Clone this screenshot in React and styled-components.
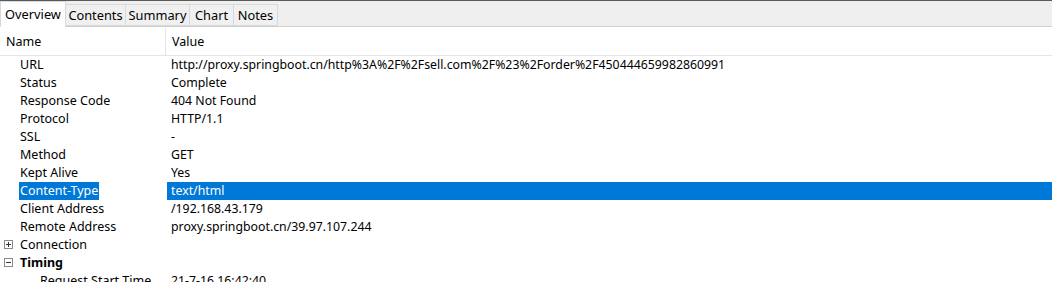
import React from "react";
import styled, { createGlobalStyle } from "styled-components";

const Global = createGlobalStyle`
  html, body { margin: 0; padding: 0; background: #fff; }
  body { font-family: "Noto Sans", "Noto Sans CJK SC", sans-serif; font-size: 12px; color: #000; overflow: hidden; }
`;

const Page = styled.div`
  width: 1052px;
  height: 282px;
  overflow: hidden;
  border-top: 1px solid #5a5a5a;
  box-sizing: border-box;
`;

const TabBar = styled.div`
  display: flex;
  align-items: flex-end;
  height: 25px;
  background: #efefef;
  border-bottom: 1px solid #d0d0d0;
  padding-left: 1px;
`;

const Tab = styled.div`
  box-sizing: border-box;
  width: ${(p) => p.$w}px;
  height: ${(p) => (p.$active ? "26px" : "22px")};
  margin-bottom: ${(p) => (p.$active ? "-1px" : "0")};
  display: flex;
  align-items: center;
  justify-content: center;
  background: ${(p) => (p.$active ? "#fff" : "#f0f0f0")};
  border: 1px solid #d9d9d9;
  border-bottom: ${(p) => (p.$active ? "none" : "1px solid #d9d9d9")};
  margin-left: -1px;
  font-size: 12.8px;
  line-height: 1;
  padding-top: ${(p) => (p.$active ? "0" : "1px")};
`;

const Header = styled.div`
  display: grid;
  grid-template-columns: 166px 1fr;
  height: 27px;
  border-bottom: 1px solid #e5e5e5;
  margin-top: 1px;
`;

const HeadCell = styled.div`
  display: flex;
  align-items: center;
  padding-left: ${(p) => p.$pad}px;
  font-size: 12.5px;
  border-right: ${(p) => (p.$divider ? "1px solid #e5e5e5" : "none")};
`;

const Row = styled.div`
  display: grid;
  grid-template-columns: 167px 1fr;
  height: 18px;
  font-size: 12.5px;
  line-height: 18px;
  white-space: nowrap;
`;

const NameCell = styled.div`
  display: flex;
  align-items: center;
  padding-left: ${(p) => p.$indent}px;
  font-weight: ${(p) => (p.$bold ? 700 : 400)};
  position: relative;
`;

const NameText = styled.span`
  padding: 0 1px;
  margin-left: -1px;
  background: ${(p) => (p.$sel ? "#0078d7" : "transparent")};
  color: ${(p) => (p.$sel ? "#fff" : "#000")};
`;

const ValueCell = styled.div`
  padding-left: 4px;
  font-size: 12.3px;
  background: ${(p) => (p.$sel ? "#0078d7" : "transparent")};
  color: ${(p) => (p.$sel ? "#fff" : "#000")};
`;

const Toggle = styled.span`
  position: absolute;
  left: 4px;
  top: 4px;
  width: 9px;
  height: 9px;
  box-sizing: border-box;
  border: 1px solid #8a8a8a;
  background: #fff;
  &::before {
    content: "";
    position: absolute;
    left: 1px;
    top: 3px;
    width: 5px;
    height: 1px;
    background: #333;
  }
  &::after {
    content: "";
    display: ${(p) => (p.$open ? "none" : "block")};
    position: absolute;
    left: 3px;
    top: 1px;
    width: 1px;
    height: 5px;
    background: #333;
  }
`;

const tabs = [
  { label: "Overview", w: 66 },
  { label: "Contents", w: 61 },
  { label: "Summary", w: 65 },
  { label: "Chart", w: 45 },
  { label: "Notes", w: 45 },
];

const rows = [
  { name: "URL", value: "http://proxy.springboot.cn/http%3A%2F%2Fsell.com%2F%23%2Forder%2F450444659982860991", indent: 20 },
  { name: "Status", value: "Complete", indent: 20 },
  { name: "Response Code", value: "404 Not Found", indent: 20 },
  { name: "Protocol", value: "HTTP/1.1", indent: 20 },
  { name: "SSL", value: "-", indent: 20 },
  { name: "Method", value: "GET", indent: 20 },
  { name: "Kept Alive", value: "Yes", indent: 20 },
  { name: "Content-Type", value: "text/html", indent: 20, sel: true },
  { name: "Client Address", value: "/192.168.43.179", indent: 20 },
  { name: "Remote Address", value: "proxy.springboot.cn/39.97.107.244", indent: 20 },
  { name: "Connection", value: "", indent: 20, toggle: "closed" },
  { name: "Timing", value: "", indent: 20, toggle: "open", bold: true },
  { name: "Request Start Time", value: "21-7-16 16:42:40", indent: 40 },
];

export default function App() {
  return (
    <Page>
      <Global />
      <TabBar>
        {tabs.map((t, i) => (
          <Tab key={t.label} $w={t.w} $active={i === 0}>{t.label}</Tab>
        ))}
      </TabBar>
      <Header>
        <HeadCell $pad={6} $divider>Name</HeadCell>
        <HeadCell $pad={6}>Value</HeadCell>
      </Header>
      {rows.map((r) => (
        <Row key={r.name}>
          <NameCell $indent={r.indent} $bold={r.bold}>
            {r.toggle && <Toggle $open={r.toggle === "open"} />}
            <NameText $sel={r.sel}>{r.name}</NameText>
          </NameCell>
          <ValueCell $sel={r.sel}>{r.value}</ValueCell>
        </Row>
      ))}
    </Page>
  );
}
